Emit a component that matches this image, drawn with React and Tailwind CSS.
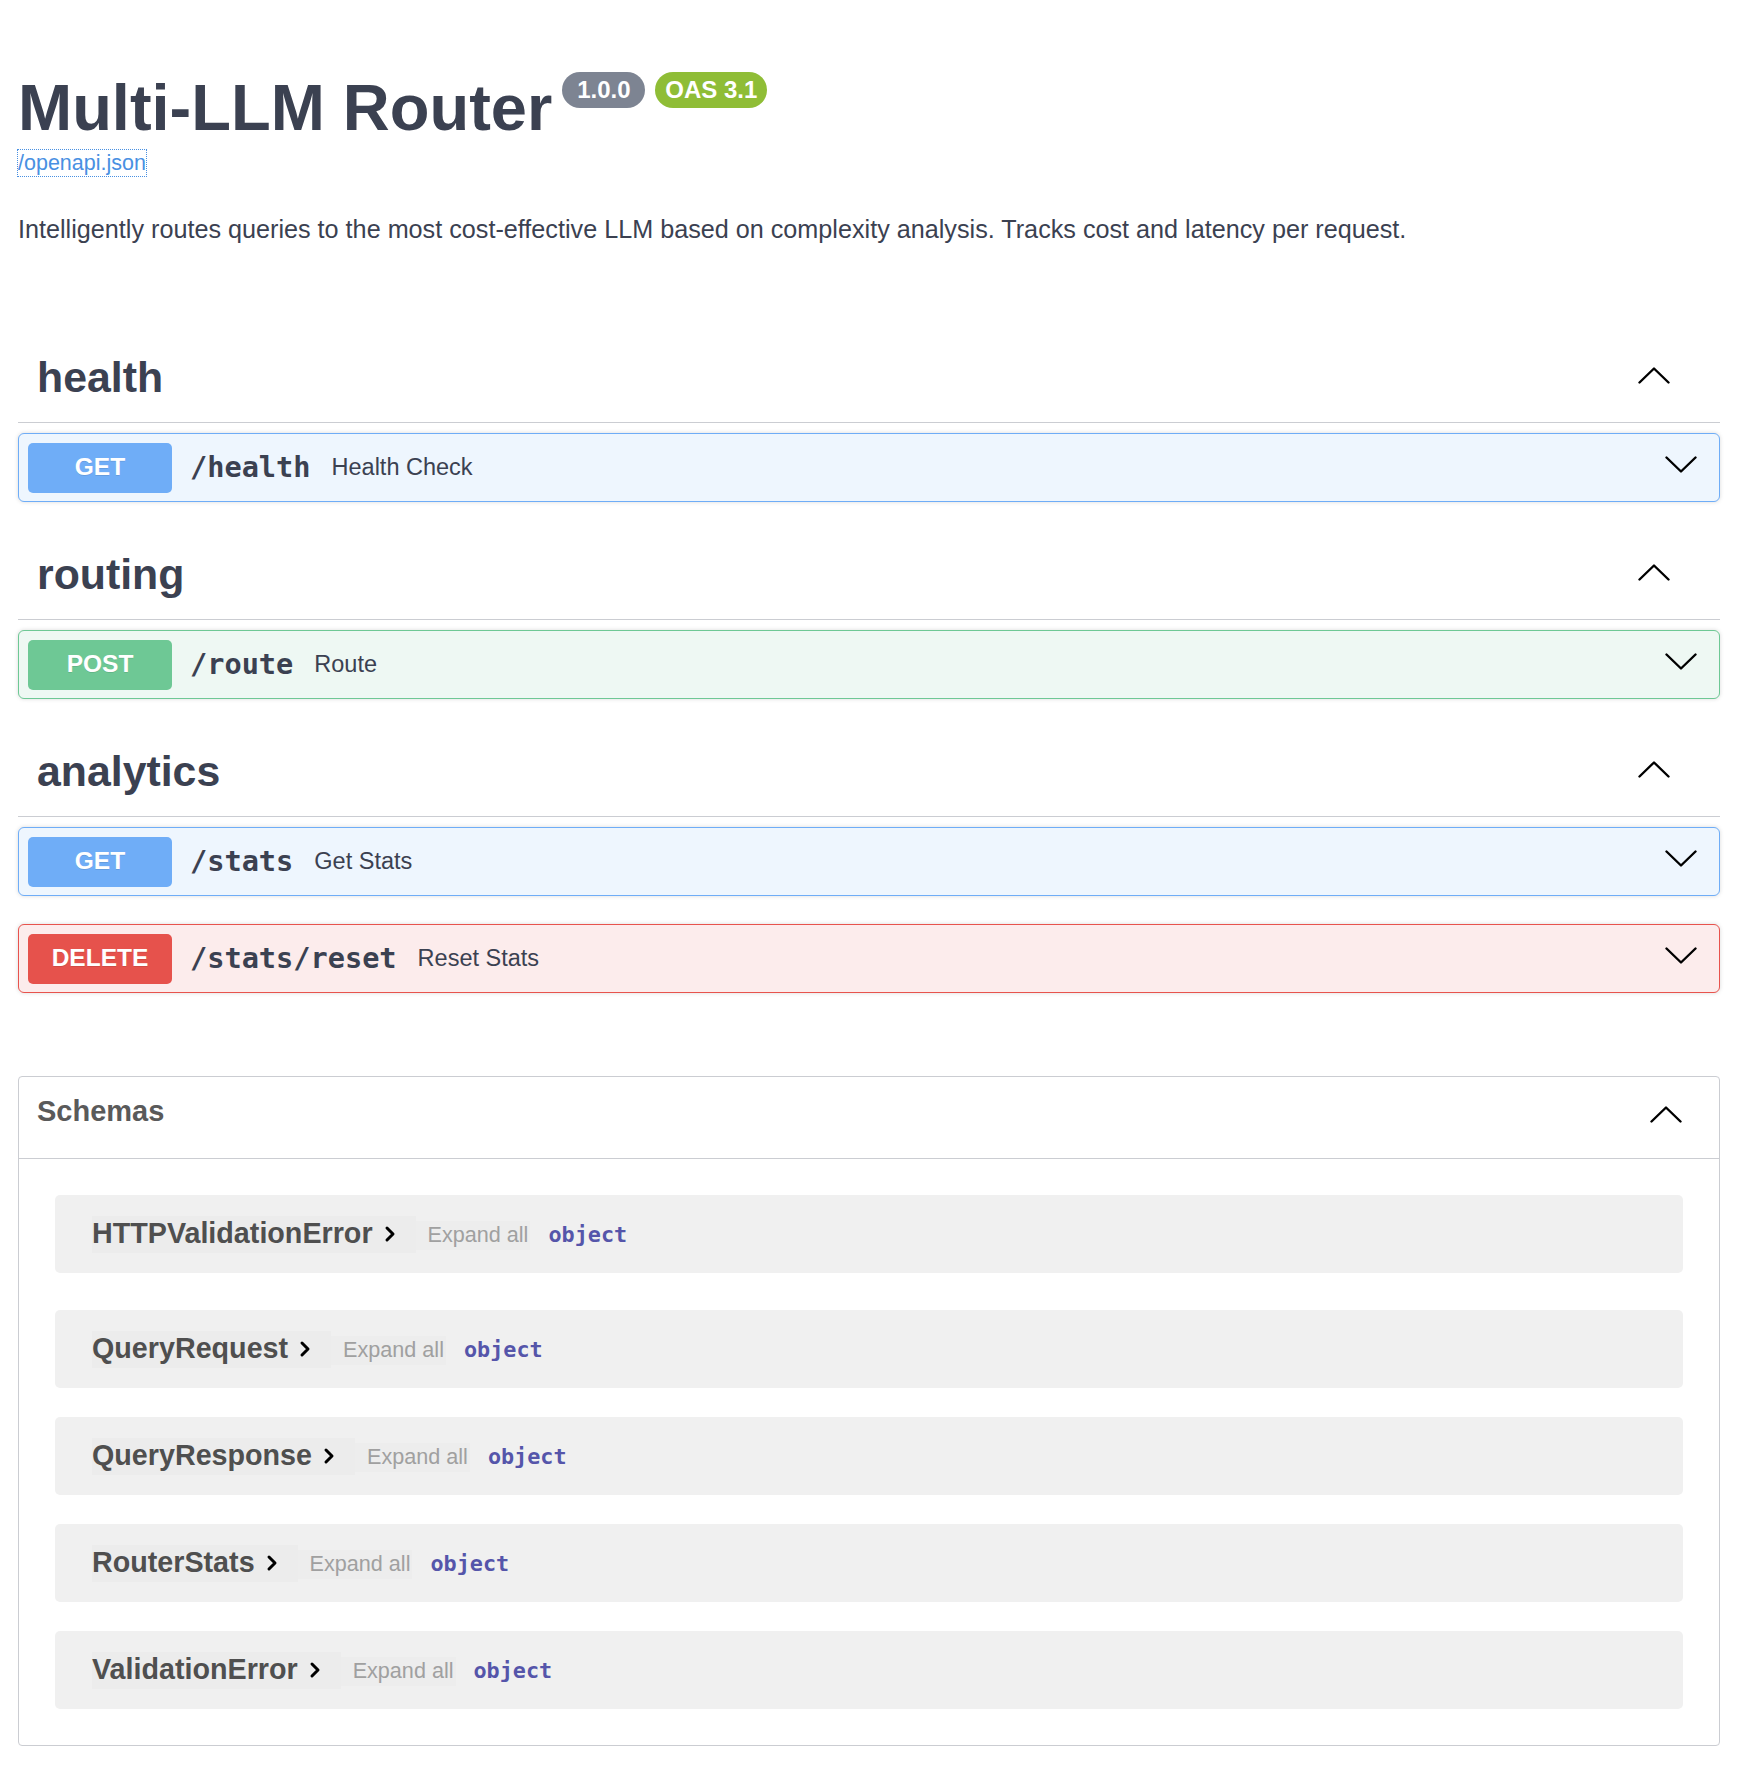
import React from "react";

// Operation colour sets, one per HTTP method
const METHOD_STYLES = {
  GET: {
    block: "bg-[#eef6fe] border-[#6fadf7]",
    badge: "bg-[#6fadf7]",
  },
  POST: {
    block: "bg-[#eef8f3] border-[#6ec895]",
    badge: "bg-[#6ec895]",
  },
  DELETE: {
    block: "bg-[#fcecec] border-[#e8534d]",
    badge: "bg-[#e6524c]",
  },
};

const TAGS = [
  {
    name: "health",
    ops: [{ method: "GET", path: "/health", summary: "Health Check" }],
  },
  {
    name: "routing",
    ops: [{ method: "POST", path: "/route", summary: "Route" }],
  },
  {
    name: "analytics",
    ops: [
      { method: "GET", path: "/stats", summary: "Get Stats" },
      { method: "DELETE", path: "/stats/reset", summary: "Reset Stats" },
    ],
  },
];

const SCHEMAS = [
  "HTTPValidationError",
  "QueryRequest",
  "QueryResponse",
  "RouterStats",
  "ValidationError",
];

function Chevron({ dir = "up", className = "" }) {
  return (
    <svg
      width="32"
      height="17"
      viewBox="0 0 32 17"
      fill="none"
      stroke="currentColor"
      strokeWidth="2.4"
      strokeLinecap="round"
      strokeLinejoin="round"
      className={className}
    >
      {dir === "up" ? (
        <polyline points="1.5,15.5 16,1.5 30.5,15.5" />
      ) : (
        <polyline points="1.5,1.5 16,15.5 30.5,1.5" />
      )}
    </svg>
  );
}

function ArrowRight() {
  return (
    <svg
      width="12"
      height="18"
      viewBox="0 0 12 18"
      fill="none"
      stroke="currentColor"
      strokeWidth="3"
      strokeLinecap="round"
      strokeLinejoin="round"
      className="text-black"
    >
      <polyline points="3,3 9,9 3,15" />
    </svg>
  );
}

function Operation({ method, path, summary }) {
  const s = METHOD_STYLES[method];
  return (
    <div
      className={`flex h-[69px] items-center rounded-[6px] border pl-[9px] pr-[22px] shadow-[0_0_4px_rgba(0,0,0,0.15)] ${s.block}`}
    >
      <span
        className={`flex h-[50px] w-[144px] shrink-0 items-center justify-center rounded-[5px] text-[24.5px] font-bold text-white [text-shadow:0_1px_0_rgba(0,0,0,0.1)] ${s.badge}`}
      >
        {method}
      </span>
      <span className="ml-[18px] font-['DejaVu_Sans_Mono',monospace] text-[28.6px] font-bold text-[#3b4151]">
        {path}
      </span>
      <span className="ml-[21px] text-[23.5px] text-[#3b4151]">{summary}</span>
      <Chevron dir="down" className="mb-[7px] ml-auto text-black" />
    </div>
  );
}

function TagSection({ name, ops }) {
  return (
    <section>
      <div className="flex h-[90px] items-center justify-between border-b border-[#cbcdd2] pl-[19px] pr-[50px]">
        <h3 className="text-[42.8px] font-bold text-[#3b4151]">{name}</h3>
        <Chevron dir="up" className="mb-[4px] text-black" />
      </div>
      <div className="mt-[10px] flex flex-col gap-[28px]">
        {ops.map((op) => (
          <Operation key={op.method + op.path} {...op} />
        ))}
      </div>
    </section>
  );
}

function SchemaRow({ name, first }) {
  return (
    <div
      className={`flex h-[78px] items-center rounded-[5px] bg-[#f0f0f0] pl-[37px] ${
        first ? "mb-[37px]" : ""
      }`}
    >
      <span className="flex h-[37px] items-center bg-[#ececec] pr-[20px]">
        <span className="text-[28.7px] font-bold text-[#4f4f4f]">{name}</span>
        <span className="ml-[11px] flex items-center">
          <ArrowRight />
        </span>
      </span>
      <span className="mt-[3px] flex h-[29px] items-center bg-[#ededed] pl-[12px] pr-[2px] text-[21.6px] text-[#a0a0a0]">
        Expand all
      </span>
      <span className="ml-[18px] mt-[3px] font-['DejaVu_Sans_Mono',monospace] text-[21.8px] font-bold text-[#55a]">
        object
      </span>
    </div>
  );
}

export default function App() {
  return (
    <div className="min-h-screen bg-white pb-[37px] pl-[18px] pr-[22px] pt-[70px] font-['Liberation_Sans',Arial,sans-serif] text-[#3b4151]">
      {/* Title and version stamps */}
      <div className="flex items-start">
        <h1 className="text-[65px] font-bold leading-[76px] text-[#3b4151]">
          Multi-LLM Router
        </h1>
        <span className="ml-[10px] mt-[2px] flex h-[36px] w-[83px] items-center justify-center rounded-full bg-[#7d8492] text-[24px] font-bold text-white">
          1.0.0
        </span>
        <span className="ml-[10px] mt-[2px] flex h-[36px] w-[112px] items-center justify-center rounded-full bg-[#8fbd36] text-[24px] font-bold text-white">
          OAS 3.1
        </span>
      </div>
      <div className="mt-[3px]">
        <a
          href="#openapi"
          className="-ml-[1px] inline-block border border-dotted border-[#4990e2] text-[21.5px] leading-[26px] text-[#4990e2]"
        >
          /openapi.json
        </a>
      </div>
      <p className="mt-[37px] text-[25.2px] leading-[30px] text-[#3b4151]">
        Intelligently routes queries to the most cost-effective LLM based on
        complexity analysis. Tracks cost and latency per request.
      </p>

      {/* Operations grouped by tag */}
      <div className="mt-[89px] flex flex-col gap-[28px]">
        {TAGS.map((t) => (
          <TagSection key={t.name} {...t} />
        ))}
      </div>

      {/* Schemas */}
      <section className="mt-[83px] rounded-[4px] border border-[#cbcdd2]">
        <div className="flex h-[82px] items-center justify-between border-b border-[#cbcdd2] pb-[11px] pl-[18px] pr-[37px]">
          <h4 className="text-[29px] font-bold text-[#5a5a5a]">Schemas</h4>
          <Chevron dir="up" className="mt-[4px] text-black" />
        </div>
        <div className="p-[36px]">
          <SchemaRow name={SCHEMAS[0]} first />
          <div className="flex flex-col gap-[29px]">
            {SCHEMAS.slice(1).map((n) => (
              <SchemaRow key={n} name={n} />
            ))}
          </div>
        </div>
      </section>
    </div>
  );
}
